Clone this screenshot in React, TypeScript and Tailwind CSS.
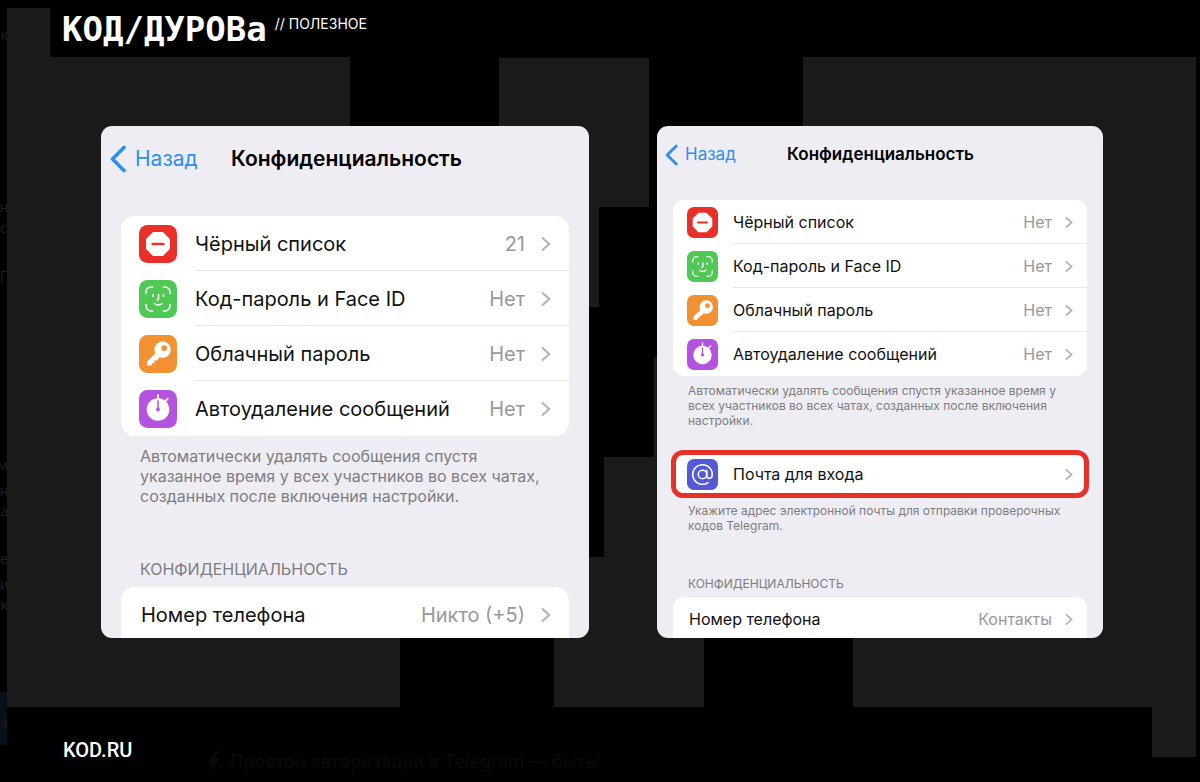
import React from 'react';

type RowIcon = 'block' | 'face' | 'key' | 'timer' | 'mail';

interface SettingRow {
  icon?: RowIcon;
  label: string;
  value?: string;
}

const leftRows: SettingRow[] = [
  { icon: 'block', label: 'Чёрный список', value: '21' },
  { icon: 'face', label: 'Код-пароль и Face ID', value: 'Нет' },
  { icon: 'key', label: 'Облачный пароль', value: 'Нет' },
  { icon: 'timer', label: 'Автоудаление сообщений', value: 'Нет' },
];

const rightRows: SettingRow[] = leftRows.map((row) => ({ ...row, value: 'Нет' }));

const edgeLetters = [
  { text: 'к', y: 40 },
  { text: 'н', y: 212 },
  { text: 'с', y: 233 },
  { text: 'Г', y: 282 },
  { text: 'м', y: 470 },
  { text: 'н', y: 496 },
  { text: 'а', y: 516 },
  { text: 'е', y: 564 },
  { text: 'и', y: 590 },
  { text: 'к', y: 610 },
  { text: 'а', y: 727 },
];

const sizes = {
  lg: {
    header: 'h-[66px] pl-[9px] mb-6',
    back: 'gap-[9px] text-[21px]',
    backIcon: 'w-4 h-7',
    title: 'left-[130px] text-[21px]',
    list: 'mx-5 rounded-[14px]',
    row: 'h-[55px] text-[20px]',
    iconBox: 'w-[56px] ml-[18px]',
    icon: 'size-[38px]',
    plain: 'pl-5',
    divider: 'left-[74px]',
    chevron: 'w-[10px] h-4 ml-4 mr-[18px]',
    note: 'mx-[39px] text-[16px] leading-5',
  },
  sm: {
    header: 'h-[58px] pl-2 mb-4',
    back: 'gap-[7px] text-[17px]',
    backIcon: 'w-[13px] h-[22px]',
    title: 'left-[130px] text-[17px]',
    list: 'mx-4 rounded-[11px]',
    row: 'h-11 text-[16px]',
    iconBox: 'w-[46px] ml-[14px]',
    icon: 'size-[31px]',
    plain: 'pl-4',
    divider: 'left-[60px]',
    chevron: 'w-2 h-[13px] ml-[13px] mr-[14px]',
    note: 'mx-[31px] text-[12px] leading-[15px]',
  },
};

type Size = keyof typeof sizes;

const Chevron = ({ className }: { className: string }) => (
  <svg viewBox="0 0 10 16" fill="none" stroke="#b4b4b6" strokeWidth="2.2" className={`shrink-0 ${className}`}><path d="m1 1.5 7.2 6.5L1 14.5"></path></svg>
);

const BackIcon = ({ className }: { className: string }) => (
  <svg viewBox="0 0 16 28" fill="none" stroke="#2f8ff0" strokeWidth="3.6" strokeLinecap="round" strokeLinejoin="round" className={className}><path d="M14 2.5 2.5 14 14 25.5"></path></svg>
);

const BlockIcon = () => (
  <>
    <rect width="38" height="38" rx="8.5" fill="#ea2f29" />
    <path d="M14.5 8h9l6.500 6.500v9L23.500 30h-9L8 23.500v-9z" fill="#fff" stroke="#fff" strokeWidth="2" strokeLinejoin="round" />
    <path d="M13.500 19h11" stroke="#ea2f29" strokeWidth="2.400" strokeLinecap="round" />
  </>
);

const FaceIcon = () => (
  <>
    <rect width="38" height="38" rx="8.5" fill="#4fc954" />
    <g fill="none" stroke="#fff" strokeWidth="1.6" strokeLinecap="round" strokeLinejoin="round">
      <path d="M7 13.500V12a5 5 0 0 1 5-5h1.500M24.500 7H26a5 5 0 0 1 5 5v1.500M31 24.500V26a5 5 0 0 1-5 5h-1.500M13.500 31H12a5 5 0 0 1-5-5v-1.500" />
      <path d="M14 14.500v2M24.500 14.500v2M19.500 14.500v4.300c0 .8-.4 1.200-1.400 1.200M15.500 23.500c1.900 1.900 5.600 1.900 7.500 0" />
    </g>
  </>
);

const KeyIcon = () => (
  <>
    <rect width="38" height="38" rx="8.5" fill="#f29132" />
    <path d="m19 19-8.500 8.500" stroke="#fff" strokeWidth="4.500" strokeLinecap="round" />
    <path d="M8 26.500v4h4.500l.5-2.300h2.300v-2.700h2.400l2.800-3-3.500-4z" fill="#fff" strokeLinejoin="round" />
    <path fillRule="evenodd" d="M23.600 6.500a8.200 8.200 0 1 0 0 16.400 8.200 8.200 0 0 0 0-16.400zm1.600 3.700a2.900 2.900 0 1 1 0 5.800 2.900 2.900 0 0 1 0-5.800z" fill="#fff" />
  </>
);

const TimerIcon = () => (
  <>
    <rect width="38" height="38" rx="8.5" fill="#b453e0" />
    <circle cx="19" cy="19.500" r="11.300" fill="#fff" />
    <path d="M19 5v4M26.500 11l2.300-2.300" stroke="#fff" strokeWidth="1.800" strokeLinecap="round" />
    <path d="M19 11v8" stroke="#b453e0" strokeWidth="1.600" strokeLinecap="round" />
    <circle cx="19" cy="19.500" r="1.900" fill="#b453e0" />
  </>
);

const MailIcon = () => (
  <>
    <rect width="38" height="38" rx="8.5" fill="#5558d9" />
    <g fill="none" stroke="#fff" strokeWidth="1.900" strokeLinecap="round">
      <circle cx="19" cy="19" r="5.200" />
      <path d="M24.200 13.800v6.700c0 4.800 6.800 4.300 6.800-1.500a12 12 0 1 0-5.200 9.900" />
    </g>
  </>
);

const icons: Record<RowIcon, React.FC> = {
  block: BlockIcon,
  face: FaceIcon,
  key: KeyIcon,
  timer: TimerIcon,
  mail: MailIcon,
};

const Row: React.FC<{ row: SettingRow; size: Size; divided?: boolean }> = ({ row, size, divided }) => {
  const s = sizes[size];
  const Icon = row.icon ? icons[row.icon] : null;

  return (
    <li className="relative">
      <button className={`w-full flex items-center text-left text-[#111] ${s.row}`}>
        {Icon && (
          <span className={`shrink-0 ${s.iconBox}`}>
            <svg viewBox="0 0 38 38" className={s.icon}><Icon /></svg>
          </span>
        )}
        <span className={`flex-1 whitespace-nowrap ${Icon ? '' : s.plain}`}>{row.label}</span>
        {row.value && <span className="text-[#98989b]">{row.value}</span>}
        <Chevron className={s.chevron} />
      </button>
      {divided && <span className={`absolute right-0 bottom-0 h-px bg-[#e8e8ea] ${s.divider}`}></span>}
    </li>
  );
};

const SettingsList: React.FC<{ rows: SettingRow[]; size: Size; className?: string }> = ({ rows, size, className = '' }) => (
  <ul className={`bg-white ${sizes[size].list} ${className}`}>
    {rows.map((row, i) => (
      <Row key={row.label} row={row} size={size} divided={i < rows.length - 1} />
    ))}
  </ul>
);

const PanelHeader = ({ size }: { size: Size }) => {
  const s = sizes[size];
  return (
    <div className={`relative flex items-center ${s.header}`}>
      <button className={`flex items-center text-[#2f8ff0] ${s.back}`}>
        <BackIcon className={s.backIcon} />
        Назад
      </button>
      <h2 className={`absolute font-semibold text-black whitespace-nowrap ${s.title}`}>Конфиденциальность</h2>
    </div>
  );
};

const Backdrop = () => (
  <svg viewBox="0 0 1200 782" preserveAspectRatio="xMidYMid slice" className="absolute inset-0 w-full h-full" aria-hidden="true">
    <rect y="692" width="7" height="53" fill="#06111d" />
    <g fill="#1c1d1f" fontSize="14" textAnchor="end">
      {edgeLetters.map((l) => <text key={l.y} x="8" y={l.y}>{l.text}</text>)}
    </g>
    <g fill="#1a1a1a">
      <path d="M7 8h43v49h300v250h50v400H7z" />
      <path d="M499 58h150v149h-50v100H499z" />
      <path d="M654 357h50v350H554V557h50V457h50z" />
      <path d="M803 57h393v700h-44v-50H853V357h-50z" />
    </g>
    <path d="m218 750-10 12h5l-4 9 12-13h-6l5-8z" fill="#0e0c05" />
  </svg>
);

const App: React.FC = () => {
  return (
    <div className="relative min-h-screen flex flex-col overflow-hidden bg-black font-['Inter','Liberation_Sans',sans-serif]">
      <Backdrop />
      <header className="relative flex items-start h-[126px] pl-[62px] pt-[13px] text-white">
        <h1 className="font-['DejaVu_Sans_Mono',monospace] font-bold text-[34px] leading-8 whitespace-nowrap">КОД/ДУРОВа</h1>
        <span className="ml-2 text-[14px] leading-[22px]">// ПОЛЕЗНОЕ</span>
      </header>

      <main className="relative grid grid-cols-[488fr_446fr] gap-[68px] pl-[101px] pr-[97px]">
        <section className="bg-[#eeedf3] rounded-[11px] overflow-hidden">
          <PanelHeader size="lg" />
          <SettingsList rows={leftRows} size="lg" />
          <p className={`mt-[10px] text-[#7d7d82] ${sizes.lg.note}`}>
            Автоматически удалять сообщения спустя указанное время у всех участников во всех чатах, созданных после включения настройки.
          </p>
          <h3 className={`mt-[53px] mb-2 uppercase text-[#7d7d82] ${sizes.lg.note}`}>Конфиденциальность</h3>
          <SettingsList rows={[{ label: 'Номер телефона', value: 'Никто (+5)' }]} size="lg" className="-mb-1 rounded-b-none" />
        </section>

        <section className="bg-[#eeedf3] rounded-[11px] overflow-hidden">
          <PanelHeader size="sm" />
          <SettingsList rows={rightRows} size="sm" />
          <p className={`mt-[7px] text-[#7d7d82] ${sizes.sm.note}`}>
            Автоматически удалять сообщения спустя указанное время у всех участников во всех чатах, созданных после включения настройки.
          </p>
          <div className="mt-[22px] mx-[14px] rounded-[12px] border-[5px] border-[#e63127] bg-white">
            <ul className="-mx-[3px] h-[38px] flex flex-col justify-center">
              <Row row={{ icon: 'mail', label: 'Почта для входа' }} size="sm" />
            </ul>
          </div>
          <p className={`mt-[5px] text-[#7d7d82] ${sizes.sm.note}`}>
            Укажите адрес электронной почты для отправки проверочных кодов Telegram.
          </p>
          <h3 className={`mt-[43px] mb-[6px] uppercase text-[#7d7d82] ${sizes.sm.note}`}>Конфиденциальность</h3>
          <SettingsList rows={[{ label: 'Номер телефона', value: 'Контакты' }]} size="sm" className="-mb-[3px] rounded-b-none" />
        </section>
      </main>

      <footer className="relative flex items-start pt-[98px] pl-[63px] text-white">
        <a href="#" className="w-[167px] font-['Roboto',sans-serif] font-medium text-[20px] leading-7">KOD.RU</a>
        <span className="pt-3 text-[18px] leading-7 font-medium text-[#090909] whitespace-nowrap">Простой авторизации в Telegram — быть!</span>
      </footer>
    </div>
  );
};

export default App;
